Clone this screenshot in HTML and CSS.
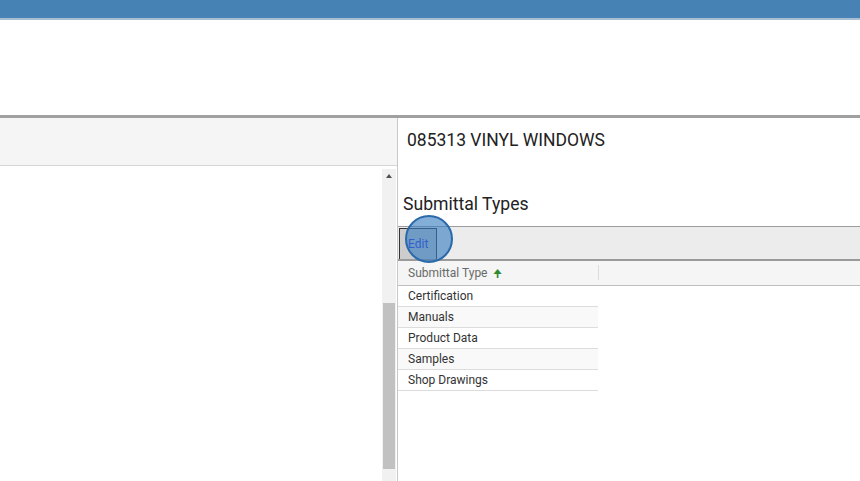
FILE: index.html
```html
<!DOCTYPE html>
<html>
<head>
<meta charset="utf-8">
<link rel="stylesheet" href="styles.css">
</head>
<body>
<div class="topbar"></div>
<div class="blank"></div>
<div class="main">
  <div class="left">
    <div class="left-head"></div>
    <div class="left-body">
      <div class="list"></div>
      <div class="scroll">
        <div class="arrow"></div>
        <div class="track"><div class="thumb"></div></div>
      </div>
    </div>
  </div>
  <div class="right">
    <div class="title">085313 VINYL WINDOWS</div>
    <div class="subtitle">Submittal Types</div>
    <div class="toolbar">
      <div class="edit">Edit</div>
      <div class="spot"></div>
    </div>
    <div class="grid">
      <div class="ghead">
        <div class="hcell">Submittal Type <span class="sort">&#129033;</span></div>
        <div class="hrest"></div>
      </div>
      <div class="row">Certification</div>
      <div class="row alt">Manuals</div>
      <div class="row">Product Data</div>
      <div class="row alt">Samples</div>
      <div class="row">Shop Drawings</div>
    </div>
  </div>
</div>
</body>
</html>
```

FILE: styles.css
```css
html, body { margin: 0; padding: 0; }
body {
  width: 860px; height: 481px; overflow: hidden;
  font-family: Roboto, "Liberation Sans", sans-serif;
  background: #fff; color: #222;
}
.topbar {
  height: 18px; background: #4682b4;
  border-bottom: 2px solid #a7bfd3;
}
.blank { height: 95px; background: #fff; border-bottom: 3px solid #a0a0a0; }
.main { display: flex; height: 363px; }
.left {
  width: 397px; border-right: 1px solid #c8c8c8;
  display: flex; flex-direction: column;
}
.left-head {
  height: 47px; background: #f4f5f4;
  border-bottom: 1px solid #d4d6d4;
}
.left-body { flex: 1; display: flex; }
.list { flex: 1; }
.scroll {
  width: 14px; margin-right: 1px; margin-top: 3px; background: #f1f1f1;
  display: flex; flex-direction: column;
}
.arrow { height: 14px; position: relative; }
.arrow::after {
  content: ""; position: absolute; left: 4px; top: 5px;
  border-left: 3px solid transparent; border-right: 3px solid transparent;
  border-bottom: 4px solid #505050;
}
.track { flex: 1; padding-top: 120px; padding-bottom: 12px; display: flex; flex-direction: column; }
.thumb { flex: 1; background: #c1c1c1; margin: 0 1px; }
.right { flex: 1; display: flex; flex-direction: column; }
.title { font-size: 17.5px; color: #222; padding: 12px 0 0 9px; height: 33px; line-height: 20px; }
.subtitle { font-size: 17.6px; color: #222; padding: 0 0 0 5px; margin-top: 30px; line-height: 22px; height: 33px; }
.toolbar {
  height: 32px; background: #ececec;
  border-top: 1px solid #9d9d9d; border-bottom: 2px solid #9a9a9a;
  position: relative; display: flex; align-items: stretch;
}
.edit {
  width: 38px; margin: 1px 0 0 1px; box-sizing: border-box;
  border: 1px solid #333; border-bottom: none;
  background: #cdcdcd; color: #1f2fe0; font-size: 12px;
  padding: 8px 0 0 8px;
}
.spot {
  position: absolute; left: 7px; top: -12px; width: 44px; height: 44px;
  border-radius: 50%; background: rgba(55, 125, 190, 0.62);
  border: 2px solid #2a6aab;
}
.grid { width: 462px; }
.ghead {
  display: flex; height: 24px; background: #f4f5f4;
  border-bottom: 1px solid #bfbfbf;
}
.hcell {
  width: 190px; font-size: 12px; color: #6a6a6a;
  padding: 1px 0 0 10px; line-height: 14px;
  border-right: 1px solid #dcdcdc; margin: 4px 0 5px 0;
}
.sort { color: #2e8b2e; font-size: 11px; margin-left: 3px; }
.hrest { flex: 1; }
.row {
  width: 190px; height: 20px; border-bottom: 1px solid #dcdcdc;
  font-size: 12px; color: #333; padding-left: 10px; line-height: 20px;
}
.row.alt { background: #f9f9f9; }
```
